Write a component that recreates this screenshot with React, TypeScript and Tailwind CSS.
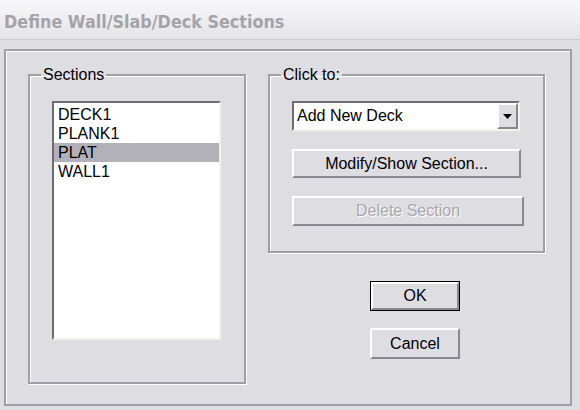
import React from 'react';

const raised =
  'border-2 border-t-white border-l-white border-r-[#88878d] border-b-[#88878d] bg-[#dedde2]';
const etched = 'border-2 border-[#a19fa6] shadow-[inset_1px_1px_0_#fff,1px_1px_0_#fff]';

const sections = ['DECK1', 'PLANK1', 'PLAT', 'WALL1'];

const Button = ({ label, disabled, isDefault, className }: { label: string; disabled?: boolean; isDefault?: boolean; className: string }) => {
  const inner = (
    <div
      className={`${raised} flex items-center justify-center w-full h-full text-[16px] leading-none ${
        disabled ? 'text-[#a9a8ae] [text-shadow:1px_1px_0_#fff]' : 'text-black'
      }`}
    >
      {label}
    </div>
  );
  if (isDefault) return <div className={`border border-black ${className}`}>{inner}</div>;
  return <div className={className}>{inner}</div>;
};

export default function App() {
  return (
    <div className="w-[580px] h-[410px] bg-[#dedde2] overflow-hidden font-['Liberation_Sans',Arial,sans-serif]">
      <div className="h-[40px] bg-gradient-to-b from-[#f8f8fa] to-[#e4e4e8] border-b border-[#cfced4] pl-[4px] pt-[11px]">
        <span className="font-['DejaVu_Sans',Verdana,sans-serif] font-bold text-[16px] leading-[20px] text-[#a4a3aa] inline-block scale-y-[1.1] origin-bottom">
          Define Wall/Slab/Deck Sections
        </span>
      </div>
      <div className="pt-[9px] pl-[4px]">
        <div className={`w-[568px] h-[357px] border-2 border-[#a19fa6] shadow-[inset_1px_1px_0_#fff] flex pl-[22px] pt-[15px]`}>
          <fieldset className={`${etched} w-[218px] h-[318px] p-0`}>
            <legend className="ml-[11px] px-[2px] text-[16px] leading-[18px] text-black">Sections</legend>
            <div className="ml-[22px] mt-[17px] w-[169px] h-[239px] border-2 border-t-[#6e6d72] border-l-[#6e6d72] border-r-[#f3f3ea] border-b-[#f3f3ea] bg-white pt-[2px]">
              {sections.map((s) => (
                <div
                  key={s}
                  className={`h-[19px] pl-[4px] text-[16px] leading-[19px] text-black ${s === 'PLAT' ? 'bg-[#b2b1ba]' : ''}`}
                >
                  {s}
                </div>
              ))}
            </div>
          </fieldset>
          <div className="ml-[22px] flex flex-col">
            <fieldset className={`${etched} w-[277px] h-[187px] p-0`}>
              <legend className="ml-[11px] px-[2px] text-[16px] leading-[18px] text-black">Click to:</legend>
              <div className="ml-[22px] mt-[17px] w-[228px] h-[30px] border-2 border-t-[#6e6d72] border-l-[#6e6d72] border-r-[#f3f3ea] border-b-[#f3f3ea] bg-white flex items-center">
                <span className="flex-1 pl-[3px] text-[16px] leading-none text-black">Add New Deck</span>
                <div className={`${raised} w-[21px] h-[26px] flex items-center justify-center`}>
                  <svg width="9" height="5" viewBox="0 0 9 5">
                    <path d="M0 0h9L4.5 5z" fill="#000" />
                  </svg>
                </div>
              </div>
              <Button label="Modify/Show Section..." className="ml-[22px] mt-[18px] w-[229px] h-[29px]" />
              <Button label="Delete Section" disabled className="ml-[22px] mt-[18px] w-[232px] h-[30px]" />
            </fieldset>
            <Button label="OK" isDefault className="ml-[102px] mt-[28px] w-[90px] h-[30px]" />
            <Button label="Cancel" className="ml-[102px] mt-[17px] w-[90px] h-[31px]" />
          </div>
        </div>
      </div>
    </div>
  );
}
